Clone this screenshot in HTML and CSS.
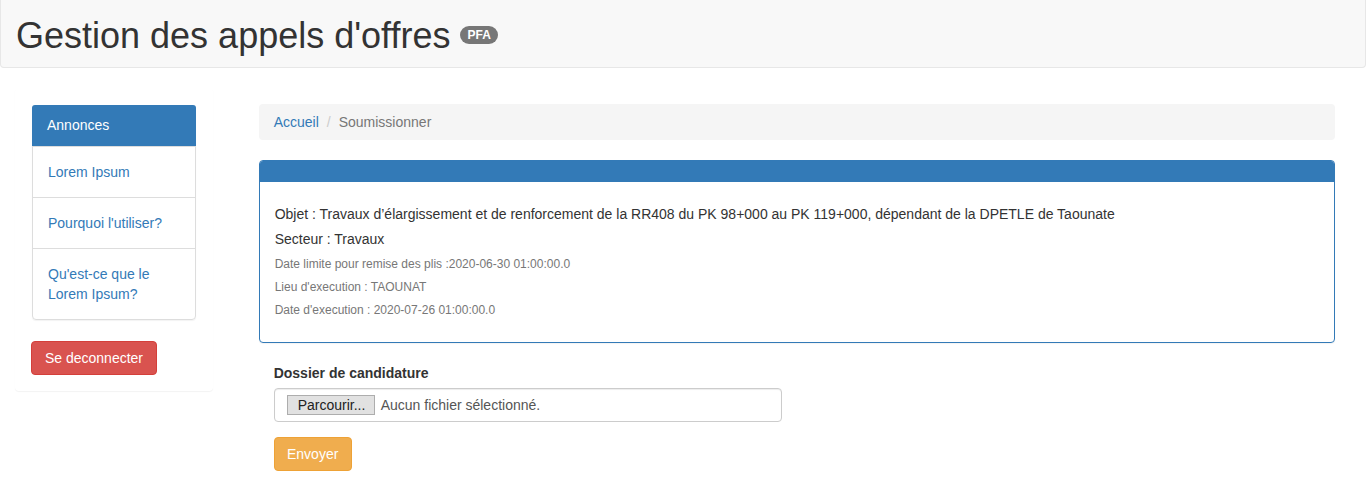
FILE: index.html
```html
<!DOCTYPE html>
<html lang="fr">
<head>
<meta charset="utf-8">
<title>Gestion des appels d'offres</title>
<link rel="stylesheet" href="styles.css">
</head>
<body>
<header class="topbar">
  <h1 class="title">Gestion des appels d'offres <span class="badge">PFA</span></h1>
</header>
<div class="container">
  <aside class="col col-side">
    <div class="panel">
      <div class="panel-body">
        <div class="menu">
          <div class="menu-heading">Annonces</div>
          <a class="menu-item" href="#">Lorem Ipsum</a>
          <a class="menu-item" href="#">Pourquoi l'utiliser?</a>
          <a class="menu-item" href="#">Qu'est-ce que le Lorem Ipsum?</a>
        </div>
        <button class="btn btn-danger" type="button">Se deconnecter</button>
      </div>
    </div>
  </aside>
  <main class="col col-main">
    <div class="panel panel-plain">
      <div class="panel-body">
        <ol class="breadcrumb">
          <li><a href="#">Accueil</a></li>
          <li class="sep">/</li>
          <li class="active">Soumissionner</li>
        </ol>
        <div class="offer">
          <div class="offer-heading"></div>
          <div class="offer-body">
            <h5 class="line">Objet : Travaux d’élargissement et de renforcement de la RR408 du PK 98+000 au PK 119+000, dépendant de la DPETLE de Taounate</h5>
            <h5 class="line">Secteur : Travaux</h5>
            <h6 class="meta">Date limite pour remise des plis :2020-06-30 01:00:00.0</h6>
            <h6 class="meta">Lieu d'execution : TAOUNAT</h6>
            <h6 class="meta">Date d'execution : 2020-07-26 01:00:00.0</h6>
          </div>
        </div>
        <form class="form">
          <div class="form-group">
            <label class="label">Dossier de candidature</label>
            <div class="file-input">
              <span class="file-btn">Parcourir...</span>
              <span class="file-name">Aucun fichier sélectionné.</span>
            </div>
          </div>
          <button class="btn btn-warning" type="button">Envoyer</button>
        </form>
      </div>
    </div>
  </main>
</div>
</body>
</html>
```
FILE: styles.css
```css
* { box-sizing: border-box; }
html, body { margin: 0; padding: 0; }
body {
  font-family: "Liberation Sans", Arial, sans-serif;
  font-size: 14px;
  line-height: 20px;
  color: #333;
  background: #fff;
}
a { color: #337ab7; text-decoration: none; }

.topbar {
  background: #f8f8f8;
  border: 1px solid #e7e7e7;
  border-top: 0;
  border-radius: 0 0 4px 4px;
  height: 68px;
  padding: 16px 15px 0;
  margin-bottom: 20px;
}
.title {
  margin: 0;
  font-size: 36px;
  font-weight: 500;
  line-height: 1.1;
  color: #333;
}
.badge {
  display: inline-block;
  vertical-align: middle;
  position: relative;
  top: -3px;
  min-width: 10px;
  padding: 3px 7px;
  font-size: 12px;
  font-weight: bold;
  line-height: 12px;
  color: #fff;
  background: #777;
  border-radius: 10px;
}

.container {
  display: grid;
  grid-template-columns: 16.6667% 1fr;
}
.col {
  padding: 0 15px;
  min-width: 0;
}

.panel {
  border: 1px solid transparent;
  border-radius: 4px;
  box-shadow: 0 1px 1px rgba(0,0,0,.05);
  margin-bottom: 20px;
  background: #fff;
}
.panel-plain { box-shadow: none; }
.panel-body { padding: 15px; }

.menu {
  border: 1px solid #ddd;
  border-radius: 4px;
  box-shadow: 0 1px 1px rgba(0,0,0,.05);
  margin: 1px 1px 20px 1px;
}
.menu-heading {
  background: #337ab7;
  color: #fff;
  padding: 10px 15px;
  border-radius: 3px 3px 0 0;
  margin: -1px -1px 0;
  height: 41px;
}
.menu-item {
  display: block;
  padding: 15px 15px;
  border-top: 1px solid #ddd;
  color: #337ab7;
}

.btn {
  display: inline-block;
  font-family: inherit;
  font-size: 14px;
  line-height: 20px;
  padding: 6px 12px;
  border: 1px solid transparent;
  border-radius: 4px;
  color: #fff;
  cursor: pointer;
}
.btn-danger { background: #d9534f; border-color: #d43f3a; width: 126px; margin-top: 1px; }
.btn-warning { background: #f0ad4e; border-color: #eea236; width: 78px; }

.breadcrumb {
  list-style: none;
  margin: 0 0 20px;
  padding: 8px 15px;
  background: #f5f5f5;
  border-radius: 4px;
  display: flex;
}
.breadcrumb .sep { color: #ccc; padding: 0 8px; }
.breadcrumb .active { color: #777; }

.offer {
  border: 1px solid #337ab7;
  border-radius: 4px;
  margin-bottom: 20px;
  box-shadow: 0 1px 1px rgba(0,0,0,.05);
}
.offer-heading {
  height: 21px;
  background: #337ab7;
  border-radius: 3px 3px 0 0;
}
.offer-body { padding: 15px; }
.line {
  margin: 10px 0;
  font-size: 14px;
  font-weight: normal;
  line-height: 1.1;
  color: #333;
}
.meta {
  margin: 10px 0;
  font-size: 12px;
  font-weight: normal;
  line-height: 1.1;
  color: #777;
}

.form { padding: 0 15px; }
.form-group { margin-bottom: 15px; }
.label {
  display: inline-block;
  font-weight: bold;
  margin-bottom: 5px;
}
.file-input {
  width: 508px;
  height: 34px;
  padding: 7px 12px;
  border: 1px solid #ccc;
  border-radius: 4px;
  box-shadow: inset 0 1px 1px rgba(0,0,0,.075);
  display: flex;
  align-items: center;
  color: #555;
}
.file-btn {
  display: inline-block;
  height: 20px;
  line-height: 18px;
  padding: 0 10px;
  background: #e1e1e1;
  border: 1px solid #adadad;
  color: #222;
  margin-right: 6px;
  width: 88px;
}
.file-name { color: #555; }
```
